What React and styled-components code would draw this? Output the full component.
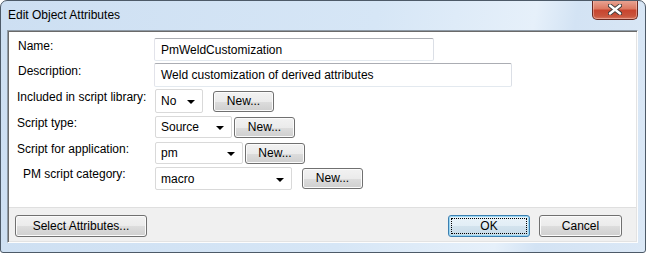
import React from 'react'
import styled, { createGlobalStyle } from 'styled-components'

const Global = createGlobalStyle`
  html, body { margin: 0; padding: 0; background: #fff; }
  body { font-family: "Segoe UI", "Liberation Sans", Arial, sans-serif; font-size: 12px; color: #000; }
`

const Window = styled.div`
  width: 646px;
  height: 253px;
  box-sizing: border-box;
  border: 1px solid #4d5a68;
  border-radius: 7px 7px 3px 3px;
  background: linear-gradient(100deg, #cddff2 0%, #d6e6f6 55%, #e6f0fa 78%, #d3e3f4 84%, #dbe8f6 100%);
  display: flex;
  flex-direction: column;
  padding: 0 7px 9px 6px;
  overflow: hidden;
`

const TitleBar = styled.div`
  height: 29px;
  display: flex;
  align-items: flex-start;
`

const Title = styled.div`
  padding: 7px 0 0 1px;
  font-size: 12px;
  line-height: 15px;
`

const CloseBtn = styled.div`
  margin-left: auto;
  margin-top: -1px;
  width: 46px;
  height: 20px;
  box-sizing: border-box;
  border: 1px solid #6b2a22;
  border-top: none;
  border-radius: 0 0 5px 5px;
  background: linear-gradient(#e9a898 0%, #dc7a63 45%, #c8452f 55%, #c9553d 85%, #d9775f 100%);
  box-shadow: inset 0 0 0 1px rgba(255, 210, 200, 0.45);
  display: flex;
  align-items: center;
  justify-content: center;
`

const Client = styled.div`
  flex: 1;
  display: flex;
  flex-direction: column;
  border: 1px solid;
  border-color: #8e9aa6 #fdfdfd #fdfdfd #8e9aa6;
  box-shadow: inset 1px 1px 0 #6a6a6a, inset -1px -1px 0 #e3e3e3;
`

const Form = styled.div`
  flex: 1;
  background: #fff;
  margin: 1px 1px 0 1px;
  padding-top: 6px;
  display: flex;
  flex-direction: column;
`

const Row = styled.div`
  display: flex;
  align-items: flex-start;
  margin-top: ${p => p.$mt || 0}px;
`

const Label = styled.div`
  width: ${p => 145 - (p.$indent || 8)}px;
  padding-left: ${p => p.$indent || 8}px;
  padding-top: ${p => p.$pt || 0}px;
  line-height: 15px;
  white-space: nowrap;
`

const TextBox = styled.div`
  width: ${p => p.$w}px;
  height: ${p => p.$h || 23}px;
  box-sizing: border-box;
  border: 1px solid;
  border-color: #abadb3 #dbdfe6 #e3e9ef #e2e3ea;
  border-radius: 2px;
  padding-left: 6px;
  display: flex;
  align-items: center;
`

const Combo = styled.div`
  width: ${p => p.$w}px;
  height: ${p => p.$h || 22}px;
  margin-left: 1px;
  box-sizing: border-box;
  border: 1px solid #d9d9d9;
  border-radius: 2px;
  padding: 0 7px 0 5px;
  display: flex;
  align-items: center;
  justify-content: space-between;
`

const Arrow = styled.span`
  width: 0;
  height: 0;
  border-left: 4px solid transparent;
  border-right: 4px solid transparent;
  border-top: 4px solid #000;
  margin-top: 2px;
`

const Button = styled.div`
  width: ${p => p.$w}px;
  height: ${p => p.$h || 21}px;
  margin-left: ${p => p.$ml || 0}px;
  margin-top: ${p => p.$top || 0}px;
  box-sizing: border-box;
  border: 1px solid ${p => (p.$default ? '#3c7fb1' : '#707070')};
  border-radius: 3px;
  background: ${p =>
    p.$default
      ? 'linear-gradient(#eaf3f9 0%, #e2eef6 50%, #d3e3ee 50%, #c8dbe8 100%)'
      : 'linear-gradient(#f2f2f2 0%, #ebebeb 50%, #dddddd 50%, #cfcfcf 100%)'};
  box-shadow: inset 0 0 0 1px ${p => (p.$default ? '#9ad6f2' : '#fbfbfb')};
  display: flex;
  align-items: center;
  justify-content: center;
  position: relative;
  line-height: 15px;
`

const Focus = styled.span`
  position: absolute;
  inset: 2px;
  border: 1px dotted #000;
`

const ButtonBar = styled.div`
  height: 34px;
  box-sizing: border-box;
  background: #f0f0f0;
  border-top: 1px solid #dfdfdf;
  margin: 0 1px 1px 1px;
  display: flex;
  align-items: flex-start;
  padding: 7px 14px 0 6px;
`

const Spacer = styled.div`
  flex: 1;
`

const CloseIcon = () => (
  <svg width="14" height="11" viewBox="0 0 14 11">
    <path d="M2 1.5 L12 9.5 M12 1.5 L2 9.5" stroke="#3a3a3a" strokeWidth="4.2" strokeLinecap="round" />
    <path d="M2 1.5 L12 9.5 M12 1.5 L2 9.5" stroke="#fff" strokeWidth="2.4" strokeLinecap="round" />
  </svg>
)

export default function App() {
  return (
    <>
      <Global />
      <Window>
        <TitleBar>
          <Title>Edit Object Attributes</Title>
          <CloseBtn>
            <CloseIcon />
          </CloseBtn>
        </TitleBar>
        <Client>
          <Form>
            <Row>
              <Label $indent={9} $pt={1}>Name:</Label>
              <TextBox $w={280}>PmWeldCustomization</TextBox>
            </Row>
            <Row $mt={2}>
              <Label $indent={9} $pt={1}>Description:</Label>
              <TextBox $w={358} $h={24}>Weld customization of derived attributes</TextBox>
            </Row>
            <Row $mt={2}>
              <Label $indent={8} $pt={1}>Included in script library:</Label>
              <Combo $w={48} $h={24}>No<Arrow /></Combo>
              <Button $w={61} $ml={10} $top={2} $h={21}>New...</Button>
            </Row>
            <Row $mt={3}>
              <Label $indent={8} $pt={0}>Script type:</Label>
              <Combo $w={77}>Source<Arrow /></Combo>
              <Button $w={61} $ml={2} $top={1} $h={21}>New...</Button>
            </Row>
            <Row $mt={4}>
              <Label $indent={8} $pt={0}>Script for application:</Label>
              <Combo $w={88}>pm<Arrow /></Combo>
              <Button $w={60} $ml={2} $top={1} $h={21}>New...</Button>
            </Row>
            <Row $mt={3}>
              <Label $indent={14} $pt={0}>PM script category:</Label>
              <Combo $w={137} $h={23}>macro<Arrow /></Combo>
              <Button $w={61} $ml={10} $top={1} $h={21}>New...</Button>
            </Row>
          </Form>
          <ButtonBar>
            <Button $w={132} $h={22}>Select Attributes...</Button>
            <Spacer />
            <Button $w={82} $h={22} $default>OK<Focus /></Button>
            <Button $w={83} $h={22} $ml={9}>Cancel</Button>
          </ButtonBar>
        </Client>
      </Window>
    </>
  )
}
